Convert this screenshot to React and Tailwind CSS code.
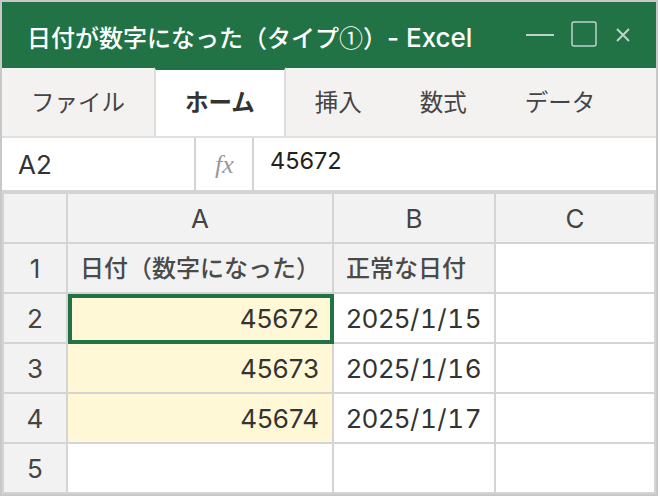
function Cell({ className = "", children }) {
  return <div className={`flex items-center pt-px leading-none ${className}`}>{children}</div>;
}

function Head({ children }) {
  return <Cell className="justify-center bg-[#f2f2f2] text-[26px] text-[#444]">{children}</Cell>;
}

function Num({ children, active }) {
  return (
    <Cell className="relative justify-end bg-[#fff8d6] pr-[13px] text-[26px] text-[#333]">
      {children}
      {active && <div className="absolute -right-[2px] -bottom-[2px] left-0 top-0 border-[4px] border-[#217346]" />}
    </Cell>
  );
}

function Title({ children }) {
  return <Cell className="bg-[#f2f2f2] pl-[12px] text-[24px] font-medium text-[#4a4a4a]">{children}</Cell>;
}

function DateCell({ year = "2025", rest }) {
  return (
    <Cell className="bg-white pl-[12px] text-[26px] text-[#333]">
      {year}
      <span className="tracking-[0.6px] tabular-nums">{rest}</span>
    </Cell>
  );
}

function Tab({ children, active }) {
  if (active) {
    return (
      <div className="-mt-px flex items-center border-x-2 border-t-[3px] border-x-[#dddddd] border-t-[#217346] bg-white px-[29px] text-[23.5px] font-bold text-[#333]">
        {children}
      </div>
    );
  }
  return <div className="flex items-center px-[29px] pt-[2px] text-[23.5px] text-[#444]">{children}</div>;
}

export default function App() {
  return (
    <div className="h-[496px] w-[660px] bg-[#fafafa] font-['Inter','Noto_Sans_CJK_JP',sans-serif]">
      <div className="flex h-[496px] w-[658px] flex-col border-2 border-[#c8c8c8]">
        <div className="flex h-[66px] items-center justify-between bg-[#217346] pl-[25px] pr-[26px] text-white">
          <span className="pt-[5px] text-[24px] font-medium">
            日付が数字になった（タイプ
            <span className="font-['Noto_Sans_CJK_JP',sans-serif] font-normal">①</span>
            ）<span className="text-[26px]">- Excel</span>
          </span>
          <div className="flex items-center text-white/70">
            <svg width="28" height="4" viewBox="0 0 28 4" className="mr-[17px]">
              <rect y="1" width="28" height="2" fill="currentColor" />
            </svg>
            <svg width="26" height="26" viewBox="0 0 26 26" className="mb-[2px] mr-[19px]">
              <rect x="1" y="1" width="24" height="24" rx="2" fill="none" stroke="currentColor" strokeWidth="1.5" />
            </svg>
            <svg width="14" height="14" viewBox="0 0 14 14">
              <path d="M1 1L13 13M13 1L1 13" fill="none" stroke="currentColor" strokeWidth="2" />
            </svg>
          </div>
        </div>

        <div className="flex h-[70px] border-b-2 border-[#e0e0e0] bg-[#f3f2f1]">
          <Tab>ファイル</Tab>
          <Tab active>ホーム</Tab>
          <Tab>挿入</Tab>
          <Tab>数式</Tab>
          <Tab>データ</Tab>
        </div>

        <div className="flex h-[54px] border-b-2 border-[#d4d4d4] bg-white">
          <div className="flex w-[194px] items-center border-r-2 border-[#d4d4d4] pl-[16px] pt-px text-[26px] text-[#333]">A2</div>
          <div className="flex w-[58px] items-center justify-center border-r-2 border-[#d4d4d4] pl-px pt-px font-['Liberation_Serif',serif] text-[26px] italic text-[#999]">fx</div>
          <div className="pl-[16px] pt-[5px] text-[23.5px] text-[#222]">45672</div>
        </div>

        <div className="grid flex-1 grid-cols-[62px_264px_160px_158px] grid-rows-[48px_48px_48px_48px_48px_48px] gap-[2px] bg-[#d4d4d4] p-[2px]">
          <Head />
          <Head>A</Head>
          <Head>B</Head>
          <Head>C</Head>

          <Head>1</Head>
          <Title>日付（数字になった）</Title>
          <Title>正常な日付</Title>
          <Cell className="bg-white" />

          <Head>2</Head>
          <Num active>45672</Num>
          <DateCell rest="/1/15" />
          <Cell className="bg-white" />

          <Head>3</Head>
          <Num>45673</Num>
          <DateCell rest="/1/16" />
          <Cell className="bg-white" />

          <Head>4</Head>
          <Num>45674</Num>
          <DateCell rest="/1/17" />
          <Cell className="bg-white" />

          <Head>5</Head>
          <Cell className="bg-white" />
          <Cell className="bg-white" />
          <Cell className="bg-white" />
        </div>
      </div>
    </div>
  );
}
